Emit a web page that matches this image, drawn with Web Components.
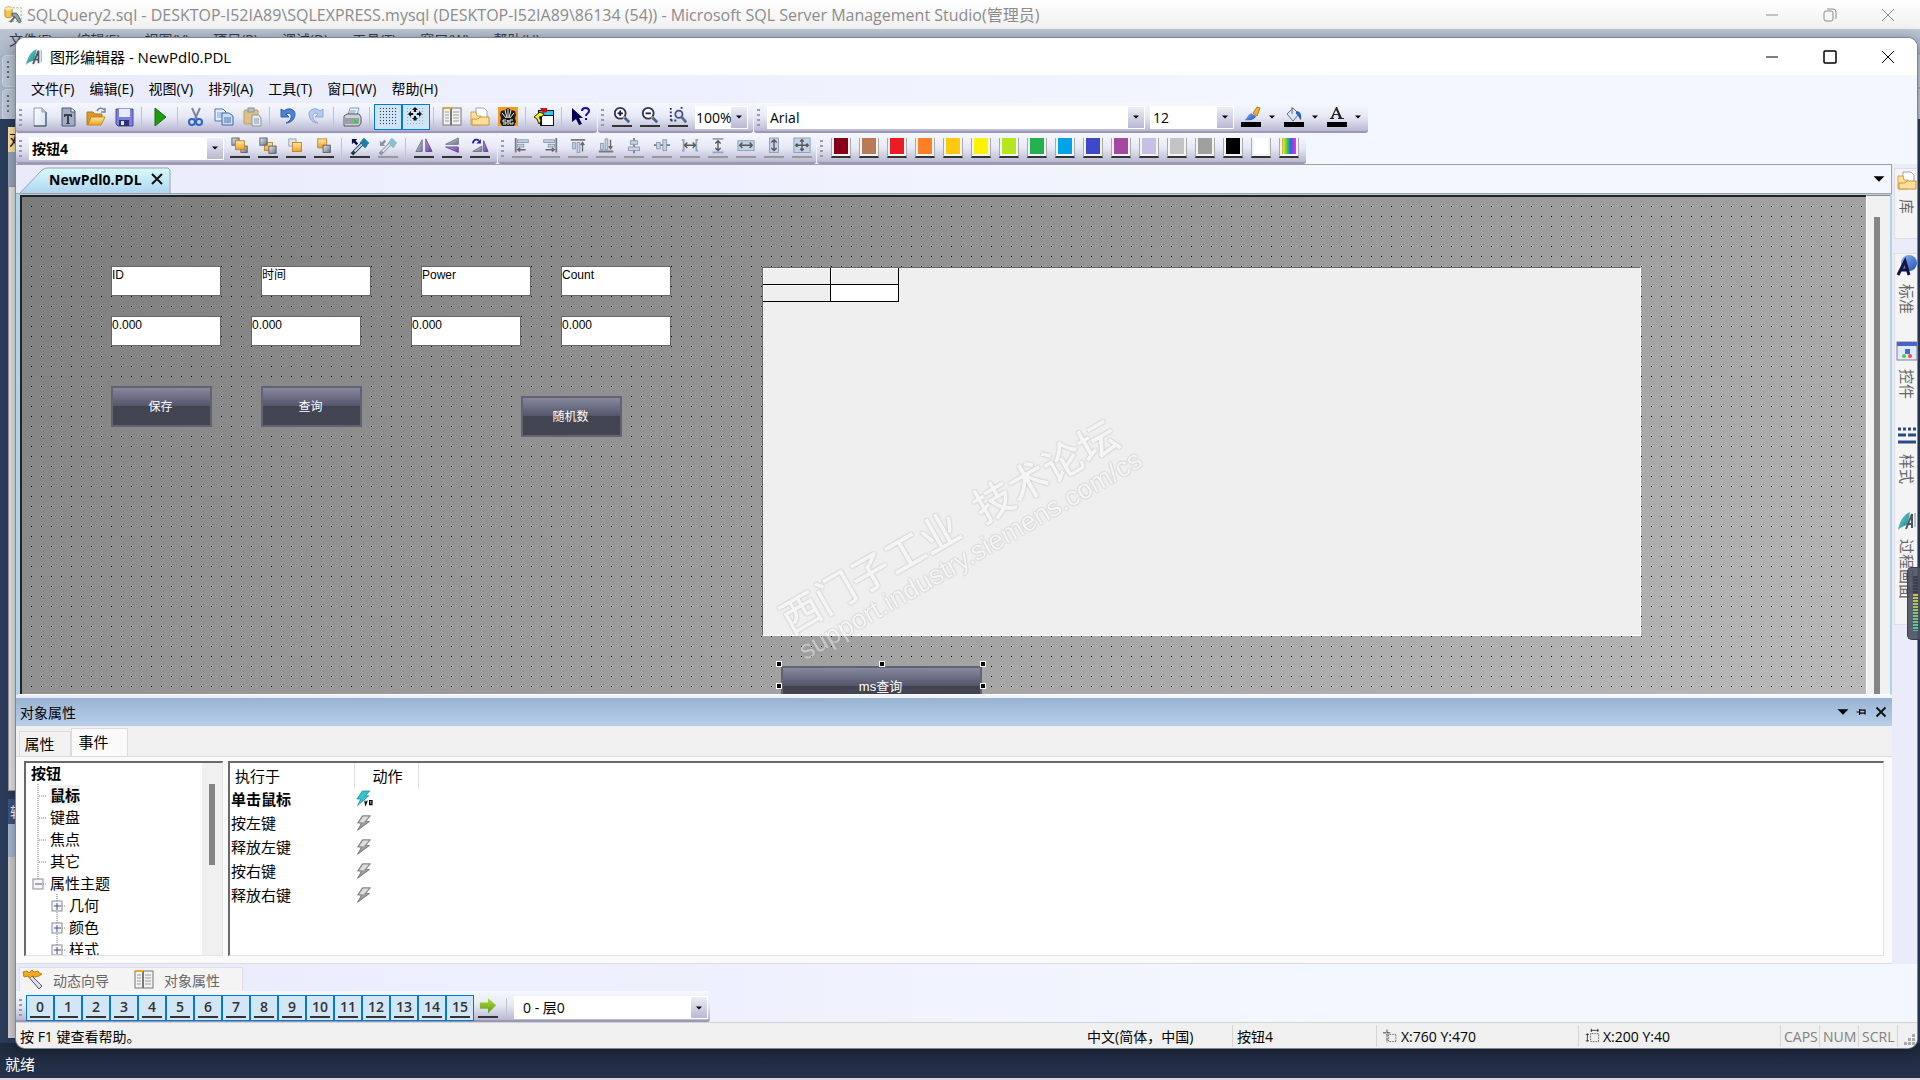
<!DOCTYPE html>
<html lang="zh-CN">
<head>
<meta charset="utf-8">
<title>图形编辑器 - NewPdl0.PDL</title>
<style>
  html, body {
    margin: 0;
    height: 100%;
    overflow: hidden;
  }
  body {
    position: relative;
    font-family: "Open Sans", "Noto Sans CJK SC", sans-serif;
    font-size: 14px;
    color: #000;
    background: #2b3c5b;
  }
</style>
</head>
<body>
<ssms-shell></ssms-shell>

<editor-window>
  <title-bar slot="title" icon="sail" caption="图形编辑器 - NewPdl0.PDL"></title-bar>
  <menu-bar slot="bars" items="文件(F),编辑(E),视图(V),排列(A),工具(T),窗口(W),帮助(H)"></menu-bar>

  <tool-row slot="bars" style="--h:32px">
    <tool-bar icons="new,text,open,save,|,run,|,cut,copy,paste,|,undo,redo,|,print,|,*grid,*snap,|,props,folder,syg,|,wizard,|,help"></tool-bar>
    <tool-bar icons="_zoomin,_zoomout,_zoomarea"><combo-box value="100%" label="缩放" style="--w:53px;--pad:0px"></combo-box></tool-bar>
    <tool-bar>
      <combo-box value="Arial" label="字体" style="--w:378px"></combo-box>
      <combo-box value="12" label="字号" style="--w:84px"></combo-box>
      <split-button icon="pen" label="线条颜色"></split-button>
      <split-button icon="fill" label="填充颜色"></split-button>
      <split-button icon="fontcolor" label="字体颜色"></split-button>
    </tool-bar>
  </tool-row>

  <tool-row slot="bars" style="--h:30px">
    <tool-bar icons="_front,_back,_forward,_backward,|,_pick,-drop,|,_fliph,_flipv,_rotate">
      <combo-box slot="first" bold value="按钮4" label="对象" style="--w:195px"></combo-box>
    </tool-bar>
    <tool-bar icons="-aleft,-aright,-atop,-abottom,-ahc,-avc,-shoriz,-svert,-samew,-sameh,-samewh" tight></tool-bar>
    <tool-bar>
      <color-palette colors="#87001a,#b87a57,#ec1c24,#ff7f27,#ffc90e,#fff200,#b5e61d,#22b14c,#00a2e8,#3f48cc,#a349a4,#c8bfe7,#c3c3c3,#9f9f9f,#000000,#ffffff,rainbow"></color-palette>
    </tool-bar>
  </tool-row>

  <document-area slot="doc" name="NewPdl0.PDL">
    <text-field-object style="left:89px;top:69px">ID</text-field-object>
    <text-field-object style="left:239px;top:69px">时间</text-field-object>
    <text-field-object style="left:399px;top:69px">Power</text-field-object>
    <text-field-object style="left:539px;top:69px">Count</text-field-object>
    <io-field-object label="ID" style="left:89px;top:119px"></io-field-object>
    <io-field-object label="时间" style="left:229px;top:119px"></io-field-object>
    <io-field-object label="Power" style="left:389px;top:119px"></io-field-object>
    <io-field-object label="Count" style="left:539px;top:119px"></io-field-object>
    <button-object style="left:89px;top:189px">保存</button-object>
    <button-object style="left:239px;top:189px">查询</button-object>
    <button-object style="left:499px;top:199px">随机数</button-object>
    <grid-object style="left:740px;top:70px"></grid-object>
    <button-object selected style="left:759px;top:469px;--w:201px">ms查询</button-object>
    <forum-mark style="left:752px;top:409px"></forum-mark>
  </document-area>

  <property-panel slot="panel"></property-panel>
  <dock-strip slot="dock"></dock-strip>
  <bottom-tabs slot="foot"></bottom-tabs>
  <tool-row slot="foot"><layer-bar></layer-bar></tool-row>
  <status-bar slot="foot"></status-bar>
</editor-window>

<level-meter></level-meter>

<script>
const DEFS = `
  <defs>
    <linearGradient id="gold" x2="0" y2="1"><stop offset="0" stop-color="#ffe9a6"/><stop offset="1" stop-color="#f0a020"/></linearGradient>
    <linearGradient id="grey" x2="1" y2="1"><stop offset="0" stop-color="#e8ebf0"/><stop offset="1" stop-color="#6b7280"/></linearGradient>
    <linearGradient id="paper" x2="1" y2="1"><stop offset="0" stop-color="#fff"/><stop offset="1" stop-color="#d5e0ec"/></linearGradient>
    <linearGradient id="blue" x2="1" y2="1"><stop offset="0" stop-color="#8fb8f5"/><stop offset="1" stop-color="#1f4fae"/></linearGradient>
    <linearGradient id="teal" x2="1" y2="1"><stop offset="0" stop-color="#6fd6d6"/><stop offset="1" stop-color="#1c7f88"/></linearGradient>
    <linearGradient id="green" x2="0" y2="1"><stop offset="0" stop-color="#b4de3e"/><stop offset="1" stop-color="#5c9a14"/></linearGradient>
    <linearGradient id="violet" x2="1" y2="1"><stop offset="0" stop-color="#c4a8e8"/><stop offset="1" stop-color="#5a2f96"/></linearGradient>
  </defs>`;

const dots = (x0, y0, n, step, fill) => {
  let out = '';
  for (let y = 0; y < n; y++) {
    for (let x = 0; x < n; x++) {
      out += `<rect x="${x0 + x * step}" y="${y0 + y * step}" width="1" height="1" fill="${fill}"/>`;
    }
  }
  return out;
};

const sheet = (x, y, s, fill) => `<rect x="${x}" y="${y}" width="${s}" height="${s}" fill="url(#${fill})" stroke="${fill === 'gold' ? '#b9832a' : '#555c68'}"/>`;
const pale = 'fill="#c3d3e8" stroke="#8b99ad"';
const lens = (x) => `<circle cx="${x}" cy="7" r="6" fill="#fff" stroke="#2a2f5e" stroke-width="2"/><path d="M11 11l3 2" stroke="#e8a020" stroke-width="3"/><path d="M13 12l5 5" stroke="#3c64a0" stroke-width="3"/>`;

// All icons are drawn on a 20 x 20 grid.
const ICONS = {
  new: '<path d="M4 1h8l4 4v14H4z" fill="url(#paper)" stroke="#8a9aae"/><path d="M16 5v14H4" fill="none" stroke="#33475f"/><path d="M12 1v4h4" fill="#b9c8da" stroke="#8a9aae"/>',
  text: '<path d="M4 1h9l4 3v15H4z" fill="#a3aec3" stroke="#4a5876"/><path d="M13 1v4h4" fill="#eef" stroke="#4a5876"/><path d="M6 7h8v3h-1l-1-1h-1v7h1v1H8v-1h1V9H8l-1 1H6z" fill="#3a3f4d"/>',
  open: '<path d="M1 5h6l2 2h7v3H5L2 18H1z" fill="#d99a2b" stroke="#b57a1a"/><path d="M5 10h14l-4 8H2z" fill="url(#gold)" stroke="#c68a22"/><path d="M11 4c2-4 6-3 7-1m1-2v4h-4" fill="none" stroke="#7386a5" stroke-width="1.5"/>',
  save: '<path d="M2 2h17v17H4l-2-2z" fill="#7a7fe0" stroke="#4a4aa6"/><rect x="5" y="2" width="11" height="8" fill="#e6ebff"/><path d="M5 13h10v6H5z" fill="#33336f"/><rect x="7" y="14" width="3" height="4" fill="#dfe4f5"/>',
  run: '<path d="M5 1l11 9L5 19z" fill="#1f9a12" stroke="#0f6f0a"/>',
  cut: '<path d="M6 1l5 11M14 1L9 12" stroke="#7c8899" stroke-width="2" fill="none"/><circle cx="6" cy="15" r="3" fill="none" stroke="#2f64c0" stroke-width="2"/><circle cx="13" cy="15" r="3" fill="none" stroke="#2f64c0" stroke-width="2"/>',
  copy: '<path d="M1 2h8l3 3v9H1z" fill="#e4eefb" stroke="#4d75b5"/><path d="M3 6h6M3 8h6M3 10h6" stroke="#7fa3d8"/><path d="M8 6h7l4 3v9H8z" fill="#c9dcf6" stroke="#3e68ad"/><path d="M10 11h7M10 13h7M10 15h7" stroke="#4d75b5"/>',
  paste: '<rect x="2" y="3" width="14" height="14" rx="1" fill="#dfc184" stroke="#b59c6a"/><rect x="6" y="1" width="6" height="4" fill="#bcc1c9" stroke="#8b9098"/><path d="M10 8h7l2 3v8h-9z" fill="#e7ebf3" stroke="#8c97a8"/><path d="M12 12h5M12 14h5M12 16h5" stroke="#8c97a8"/>',
  undo: '<path d="M3 2v8h8L8 7c3-2 6 0 5 4-1 3-3 4-5 5 5 0 9-4 9-9 0-5-7-7-11-3z" fill="#4c82d6" stroke="#2d5fb0"/>',
  redo: '<path d="M17 2v8H9l3-3C9 5 6 7 7 11c1 3 3 4 5 5-5 0-9-4-9-9 0-5 7-7 11-3z" fill="#b3cbf0" stroke="#8fa9d4"/>',
  print: '<path d="M6 8l2-7h9l-2 7z" fill="#eef3fb" stroke="#8a9ab5"/><path d="M8 4h6M7 6h6" stroke="#7aa0d8"/><path d="M2 9l3-2h12l2 3v6l-2 3H2z" fill="#cfd2d8" stroke="#555b65"/><path d="M2 11h15v6H2z" fill="#9b9fa8"/><rect x="12" y="13" width="4" height="3" fill="#32d43a"/>',
  grid: dots(2, 1, 6, 3, '#333'),
  snap: dots(1, 1, 6, 3, '#9aa') + '<path d="M9 0l3 3H6zM9 14l3-3H6zM2 7l3-3v6zM16 7l-3-3v6z" fill="#111"/><path d="M9 2v3M9 9v3M4 7h3M11 7h3" stroke="#111" stroke-width="2"/>',
  props: '<rect x="1" y="1" width="18" height="17" fill="#f2f2f2" stroke="#777"/><path d="M9 1v17" stroke="#777" stroke-width="2"/><path d="M2 1h7" stroke="#e8a830" stroke-width="2"/><path d="M3 5h4M3 8h4M3 11h4M3 14h4M11 5h6M11 8h6M11 11h6M11 14h6" stroke="#9a9a9a"/>',
  folder: '<path d="M6 1h8l3 3v8H6z" fill="#fff" stroke="#a0a7b0"/><path d="M1 5h5l1 4h4v9H1z" fill="#ffe1a0" stroke="#d9a04a"/><path d="M2 12h6l2-2h9v8H2z" fill="#ffdf9c" stroke="#cc9138"/>',
  syg: '<rect width="20" height="19" fill="#f39a1c"/><path d="M10 1l3 2 4 1 1 4-1 3 1 4-2 4H4l-2-4 1-4-1-3 1-4 4-1z" fill="#1c1c1c"/><path d="M10 2v9M7 3l2 8M13 3l-2 8M4 6l4 5M16 6l-4 5M5 13h3M5 13v2h3v2H5M9 13l1 2 1-2M10 15v3M15 13h-3v4h3v-2" stroke="#eee" fill="none"/>',
  wizard: '<path d="M4 3h16v16H6V8H4z" fill="#111"/><path d="M5 4h14v4H5z" fill="#28c8f0"/><path d="M8 9h11v9H8z" fill="#fff"/><path d="M6 1h7v4L9 6z" fill="#d01010"/><path d="M0 10l6-5 4 2-1 2-4 1 2 4-2 3-2-5z" fill="#f2f22a" stroke="#222"/>',
  help: '<path d="M2 1v14l4-3 3 6 3-1-3-6h4z" fill="#00004e"/><path d="M12 4c0-4 7-4 7 0 0 3-3 2-3 5m0 2v2" fill="none" stroke="#10109a" stroke-width="2"/>',
  zoomin: lens(8) + '<path d="M5 7h6M8 4v6" stroke="#14164a" stroke-width="2"/>',
  zoomout: lens(8) + '<path d="M5 7h6" stroke="#14164a" stroke-width="2"/>',
  zoomarea: '<path d="M2 1v15M2 15h6M14 0v4" stroke="#2a2f5e" stroke-width="2" stroke-dasharray="2 2"/><circle cx="11" cy="8" r="4" fill="#dde4f8" stroke="#4a4f80" stroke-width="2"/><path d="M14 11l5 6" stroke="#5b6a85" stroke-width="3"/>',
  front: sheet(1, 0, 8, 'grey') + sheet(11, 9, 7, 'grey') + sheet(5, 3, 10, 'gold'),
  back: sheet(6, 5, 9, 'gold') + sheet(1, 0, 8, 'grey') + sheet(11, 9, 8, 'grey'),
  forward: '<rect x="2" y="1" width="8" height="8" fill="#e2e4ea" stroke="#9aa0ab"/>' + sheet(6, 5, 10, 'gold'),
  backward: sheet(3, 1, 10, 'gold') + sheet(9, 8, 8, 'grey'),
  pick: '<path d="M1 1h6L5 3l3 3-2 2-3-3-2 2z" fill="#0a0a40"/><path d="M11 4l6 6M13 1l6 6" stroke="#1c7fa8" stroke-width="4"/><path d="M12 7L3 16l-2 2" stroke="#27364d" stroke-width="4"/><path d="M12 7L4 15" stroke="#bfe2f5" stroke-width="2"/>',
  drop: '<path d="M1 9h6L5 7l3-3-2-2-3 3-2-2z" fill="#8d93a3"/><path d="M11 4l6 6M13 1l6 6" stroke="#8ebdd0" stroke-width="4"/><path d="M12 7L3 16l-2 2" stroke="#8f98a8" stroke-width="4"/><path d="M12 7L4 15" stroke="#d9e6ef" stroke-width="2"/>',
  fliph: '<path d="M8 2v13H1z" fill="url(#grey)" stroke="#6b7280"/><path d="M12 1v14h7z" fill="url(#violet)" stroke="#6a479c"/>',
  flipv: '<path d="M17 0v7H3z" fill="url(#grey)" stroke="#6b7280"/><path d="M3 10h14v6z" fill="url(#violet)" stroke="#6a479c"/>',
  rotate: '<path d="M2 15h10V9z" fill="url(#grey)" stroke="#6b7280"/><path d="M14 3v12h5z" fill="url(#violet)" stroke="#6a479c"/><path d="M2 6c1-5 5-5 7-3" fill="none" stroke="#2323a0" stroke-width="2"/><path d="M11 1v5H6z" fill="#2323a0"/>',
  aleft: `<path d="M3 0v16" stroke="#778" stroke-width="2"/><rect x="5" y="2" width="12" height="3" ${pale}/><rect x="5" y="7" width="7" height="3" ${pale}/><path d="M6 13h8M8 11l-3 2 3 2" fill="none" stroke="#666" stroke-width="1.5"/>`,
  aright: `<path d="M17 0v16" stroke="#778" stroke-width="2"/><rect x="3" y="2" width="12" height="3" ${pale}/><rect x="8" y="7" width="7" height="3" ${pale}/><path d="M5 13h8M12 11l3 2-3 2" fill="none" stroke="#666" stroke-width="1.5"/>`,
  atop: `<path d="M2 2h16" stroke="#778" stroke-width="2"/><rect x="4" y="5" width="3" height="7" ${pale}/><rect x="9" y="5" width="3" height="11" ${pale}/><path d="M15 6v9M13 8l2-3 2 3" fill="none" stroke="#666" stroke-width="1.5"/>`,
  abottom: `<path d="M2 15h16" stroke="#778" stroke-width="2"/><rect x="4" y="6" width="3" height="7" ${pale}/><rect x="9" y="1" width="3" height="12" ${pale}/><path d="M15 2v9M13 9l2 3 2-3" fill="none" stroke="#666" stroke-width="1.5"/>`,
  ahc: `<path d="M10 0v17" stroke="#778" stroke-width="2"/><rect x="6" y="3" width="8" height="4" ${pale}/><rect x="4" y="10" width="12" height="4" ${pale}/>`,
  avc: `<path d="M1 8h18" stroke="#778" stroke-width="2"/><rect x="4" y="5" width="4" height="7" ${pale}/><rect x="11" y="2" width="4" height="12" ${pale}/>`,
  shoriz: '<path d="M1 2h2v12H1M19 2h-2v12h2" fill="none" stroke="#8ba5c8" stroke-width="2"/><path d="M5 8h10M7 5L4 8l3 3M13 5l3 3-3 3" fill="none" stroke="#555" stroke-width="1.5"/>',
  svert: '<path d="M4 1h12M4 16h12" stroke="#8ba5c8" stroke-width="2"/><path d="M10 4v9M7 6l3-3 3 3M7 11l3 3 3-3" fill="none" stroke="#555" stroke-width="1.5"/>',
  samew: `<rect x="1" y="3" width="18" height="11" ${pale}/><path d="M4 8h12M6 5L3 8l3 3M14 5l3 3-3 3" fill="none" stroke="#555" stroke-width="1.5"/>`,
  sameh: `<rect x="5" y="0" width="10" height="16" ${pale}/><path d="M10 2v12M7 5l3-3 3 3M7 11l3 3 3-3" fill="none" stroke="#555" stroke-width="1.5"/>`,
  samewh: `<rect x="1" y="0" width="18" height="16" ${pale}/><path d="M10 2v12M4 8h12M8 4l2-2 2 2M8 12l2 2 2-2M5 6L3 8l2 2M15 6l2 2-2 2" fill="none" stroke="#555" stroke-width="1.5"/>`,
  pen: '<path d="M12 6l4-6 3 1-3 8z" fill="#f0b030" stroke="#b87d18"/><path d="M3 13c3 0 3-5 7-7l5 3c-1 3-4 5-12 4z" fill="url(#blue)"/><path d="M0 15h20v5H0z"/>',
  fill: '<path d="M3 7l6-6 6 6-6 7z" fill="#dbe6f7" stroke="#61718c"/><path d="M8 0v7" stroke="#61718c"/><path d="M12 4c4 0 6 3 5 9-3-2-2-5-5-6z" fill="#2f63b5"/><path d="M0 15h20v5H0z"/>',
  fontcolor: '<path d="M10 0l5 11h2v1h-6v-1h1l-1-3H7l-1 3h1v1H3v-1h1L9 0zM9 3L7 7h4z" fill="#222" fill-rule="evenodd"/><path d="M0 15h20v5H0z"/>',
  sail: '<path d="M1 19C3 10 6 4 13 1c-1 6-2 10-3 13-3 1-6 2-9 5z" fill="url(#teal)"/><path d="M9 18l6-15v14M11 13h4" fill="none" stroke="#4d5560" stroke-width="2"/><path d="M18 2v14" stroke="#8a919c"/>',
  ssms: '<rect x="1" y="1" width="8" height="12" rx="3" fill="#f3c64a" stroke="#b5882a"/><ellipse cx="5" cy="3" rx="4" ry="2" fill="#fdeaa8"/><path d="M10 2h9v15H4" fill="none" stroke="#58c03a" stroke-dasharray="2 2"/><path d="M7 18l6-7" stroke="#5b606c" stroke-width="2"/><path d="M9 8h5l2 3 3 6-2 2-5-7-3-1z" fill="#93a0b5" stroke="#4b4f5a"/>',
  arrow: '<path d="M1 5h9V0l9 8-9 9v-5H1z" fill="url(#green)"/>',
  wand: '<path d="M4 5l3-1 12 12-3 3z" fill="#dde1ea" stroke="#4d5468"/><path d="M0 2l4-1 2 2 3-3 2 2 4-1 1 2 3 1-3 2-4 1-3-1-2 2-2-2-4 1z" fill="#f0aa20" stroke="#c47e10"/>',
  letter: '<circle cx="12" cy="7" r="8" fill="url(#blue)"/><path d="M1 19L8 5l4 14M4 14h6" fill="none" stroke="#14143e" stroke-width="3"/>',
  control: '<rect x="0" y="1" width="20" height="18" fill="#e3e8f5" stroke="#7c8296"/><path d="M0 1h20v4H0z" fill="#4763c4"/><rect x="8" y="8" width="5" height="5" fill="#3b6fe0"/><circle cx="7" cy="15" r="2" fill="#4ccc4c"/><circle cx="13" cy="15" r="2" fill="#e05050"/>',
  lines: '<path d="M1 3h18" stroke="#2a4a86" stroke-width="3" stroke-dasharray="3 2"/><path d="M1 9h8M11 9h8M1 16h18" stroke="#2a4a86" stroke-width="3"/>',
  bolt: '<path d="M8 1h10l-6 7h5L2 19l5-9H2z" fill="#9c9c9c" stroke="#6a6a6a"/><path d="M9 2h7l-6 7H4z" fill="#dedede"/>',
  boltvb: '<path d="M8 0h9l-5 6h4L2 18l4-8H1z" fill="#35c3d0" stroke="#1f8d98"/><path d="M11 12l1 5 2-5M17 12v5h3v-2h-3 3v-3z" fill="none" stroke="#000" stroke-width="1.5"/>',
  posmark: '<path d="M5 2v16M0 6h10" stroke="#222" stroke-dasharray="4 1"/><rect x="7" y="8" width="9" height="9" fill="none" stroke="#222" stroke-dasharray="1 1"/>',
  sizemark: '<rect x="7" y="7" width="10" height="10" fill="none" stroke="#222" stroke-dasharray="1 1"/><path d="M7 3h10M8 1v4M16 1v4M3 7v10M1 8h4M1 16h4" stroke="#222"/>',
  min: '<path d="M4 10h12" stroke="currentColor"/>',
  max: '<rect x="4" y="4" width="12" height="12" rx="1" fill="none" stroke="currentColor" stroke-width="1.5"/>',
  restore: '<rect x="4" y="6" width="9" height="10" rx="2" fill="none" stroke="currentColor"/><path d="M7 4h6a3 3 0 0 1 3 3v7" fill="none" stroke="currentColor"/>',
  close: '<path d="M4 4l12 12M16 4L4 16" stroke="currentColor"/>',
  xbold: '<path d="M5 5l10 10M15 5L5 15" stroke="#111" stroke-width="2"/>',
  down: '<path d="M4 7h12l-6 6z" fill="#000"/>',
  pin: '<path d="M1 10h5M6 5v10M6 7h9v5H6M15 6v8" fill="none" stroke="#000" stroke-width="2"/>'
};

class BaseElement extends HTMLElement {
  connectedCallback() {
    if (this.shadowRoot) return;
    this.attachShadow({ mode: 'open' });
    this.shadowRoot.innerHTML = `
      <style>
        * { box-sizing: border-box; }
        button, select, input { font: inherit; color: inherit; margin: 0; }
        button { border: 0; padding: 0; background: none; }
        ${this.styles()}
      </style>
      ${this.render()}`;
  }
  styles() { return ''; }
  render() { return '<slot></slot>'; }
}

class AppIcon extends BaseElement {
  styles() {
    return `
      :host { display: block; width: 20px; height: 20px; flex: none; }
      svg { display: block; overflow: visible; }`;
  }
  render() {
    return `<svg width="100%" height="100%" viewBox="0 0 20 20" aria-hidden="true">${DEFS}${ICONS[this.getAttribute('name')] || ''}</svg>`;
  }
}

class TitleBar extends BaseElement {
  styles() {
    return `
      :host { display: flex; align-items: center; height: 37px; padding-left: 9px; background: #fff; font-size: 15px; line-height: 18px; }
      app-icon { width: 18px; height: 18px; margin-right: 7px; }
      .caption { flex: 1; white-space: nowrap; }
      button { width: 58px; height: 100%; display: grid; place-items: center; }
      button app-icon { width: 20px; height: 20px; margin: 0; }
      :host([inactive]) { height: 29px; padding: 0 3px 0 4px; color: #8c8c8c; font-size: 16px; background: linear-gradient(#fff, #f0f0f0); }
      :host([inactive]) .caption { margin-left: -2px; }`;
  }
  render() {
    const mid = this.hasAttribute('inactive') ? 'restore' : 'max';
    return `
      <app-icon name="${this.getAttribute('icon')}"></app-icon>
      <span class="caption">${this.getAttribute('caption')}</span>
      <button aria-label="最小化"><app-icon name="min"></app-icon></button>
      <button aria-label="最大化"><app-icon name="${mid}"></app-icon></button>
      <button aria-label="关闭"><app-icon name="close"></app-icon></button>`;
  }
}

class MenuBar extends BaseElement {
  styles() {
    return `
      :host { display: flex; align-items: center; gap: var(--menu-gap, 15px); height: 27px; padding-left: 15px; }
      button { white-space: nowrap; line-height: 18px; }`;
  }
  render() {
    return this.getAttribute('items').split(',').map(item => `<button>${item}</button>`).join('');
  }
}

class SsmsShell extends BaseElement {
  styles() {
    return `
      :host { display: flex; flex-direction: column; height: 100%; }
      .menu { background: linear-gradient(#bcc5d3, #aab5c6); --menu-gap: 24px; height: 26px; }
      .menu menu-bar { padding-left: 9px; height: 22px; color: #333c4c; }
      .bars { height: 64px; background: #a5b1c4; display: grid; grid-template-rows: 1fr 1fr; gap: 2px; padding-left: 2px; }
      .bars i { background: #b8c2d1; border-radius: 4px 0 0 4px; border: 1px solid #c9d1dd; padding: 5px 4px; }
      .bars i::before { content: ""; display: block; width: 2px; height: 20px; background: repeating-linear-gradient(#5b6980 0 2px, transparent 2px 5px); }
      .work { flex: 1; padding: 8px 8px 5px; display: flex; flex-direction: column; background: #2b3c5b; overflow: hidden; }
      .tab { height: 25px; background: #fbe3a0; font-size: 15px; line-height: 25px; padding-left: 1px; }
      .head { height: 34px; background: #98a5bb; }
      .page { flex: 10; background: linear-gradient(90deg, #e4e4e6, #d2d2d4); border: 1px solid #999; }
      .out { height: 25px; margin-top: 8px; background: #3f5482; color: #fff; padding-left: 2px; line-height: 25px; }
      .outbar { height: 33px; background: #a9b8d3; }
      .result { flex: 3; background: #cfcfd1; }
      .status { height: 37px; display: flex; align-items: center; padding: 6px 5px 0; font-size: 15px; color: #fff; background: linear-gradient(#1f2b3d, #243049); border-bottom: 2px solid #ddd5e2; }`;
  }
  render() {
    return `
      <title-bar inactive icon="ssms" caption="SQLQuery2.sql - DESKTOP-I52IA89\\SQLEXPRESS.mysql (DESKTOP-I52IA89\\86134 (54)) - Microsoft SQL Server Management Studio(管理员)"></title-bar>
      <div class="menu"><menu-bar items="文件(F),编辑(E),视图(V),项目(P),调试(D),工具(T),窗口(W),帮助(H)"></menu-bar></div>
      <div class="bars"><i></i><i></i></div>
      <div class="work">
        <div class="tab">对</div>
        <div class="head"></div>
        <div class="page"></div>
        <div class="out">转</div>
        <div class="outbar"></div>
        <div class="result"></div>
      </div>
      <div class="status">就绪</div>`;
  }
}

class EditorWindow extends BaseElement {
  styles() {
    return `
      :host {
        position: absolute; inset: 38px 3px 32px 16px; display: flex; flex-direction: column;
        border-radius: 9px; overflow: hidden;
        box-shadow: 0 0 0 1px #7d8798, 0 2px 14px rgba(0, 0, 0, .4);
        background: linear-gradient(90deg, #e9ebfb, #f3f7ff 70%);
      }
      .middle { flex: 1; display: flex; min-height: 0; }
      .left { flex: 1; display: flex; flex-direction: column; min-width: 0; }`;
  }
  render() {
    return `
      <slot name="title"></slot>
      <slot name="bars"></slot>
      <div class="middle">
        <div class="left"><slot name="doc"></slot><slot name="panel"></slot></div>
        <slot name="dock"></slot>
      </div>
      <slot name="foot"></slot>`;
  }
}

class ToolRow extends BaseElement {
  styles() {
    return ':host { display: flex; align-items: center; height: var(--h, 31px); gap: 1px; }';
  }
}

class ToolBar extends BaseElement {
  styles() {
    return `
      :host {
        display: flex; align-items: center; height: 30px; padding-right: 3px;
        border-bottom: 2px solid #9a98b5; border-radius: 0 3px 3px 3px; box-sizing: border-box;
        background: linear-gradient(#f6f8fe, #e6e8f5 50%, #b9b8d2);
      }
      :host([tight]) { padding-right: 0; }
      .grip { width: 3px; height: 17px; margin: 0 4px 0 3px; background: repeating-linear-gradient(#9a9aaa 0 2px, transparent 2px 5px); }
      .sep { width: 1px; height: 20px; margin: 0 4px 0 3px; background: #c3c3cf; }
      button { width: 28px; height: 26px; display: grid; place-items: center; }
      .on { background: #cfe4f7; border: 1px solid #0078d7; }
      .line app-icon { border-bottom: 2px solid #333; }
      .off app-icon { border-bottom: 2px solid #999; }`;
  }
  render() {
    const names = (this.getAttribute('icons') || '').split(',').filter(Boolean);
    const kinds = { '*': 'on', '_': 'line', '-': 'off' };
    return '<span class="grip"></span><slot name="first"></slot>' + names.map(name => {
      if (name === '|') return '<span class="sep"></span>';
      const kind = kinds[name[0]];
      const icon = kind ? name.slice(1) : name;
      return `<button class="${kind || ''}" aria-label="${icon}"><app-icon name="${icon}"></app-icon></button>`;
    }).join('') + '<slot></slot>';
  }
}

class ComboBox extends BaseElement {
  styles() {
    return `
      :host { display: block; position: relative; width: var(--w, 100px); height: 23px; margin: 0 2px 0 3px; }
      select { appearance: none; width: 100%; height: 100%; border: 1px solid #fff; border-radius: 0; background: #fff; padding: 0 16px 0 var(--pad, 2px); outline: 0; }
      :host([bold]) select { font-weight: bold; }
      span { position: absolute; right: 1px; top: 1px; bottom: 1px; width: 16px; display: grid; place-items: center; background: linear-gradient(#eceef7, #b9b8d2); pointer-events: none; }
      app-icon { width: 10px; height: 10px; }`;
  }
  render() {
    return `
      <select aria-label="${this.getAttribute('label')}"><option>${this.getAttribute('value')}</option></select>
      <span><app-icon name="down"></app-icon></span>`;
  }
}

class SplitButton extends BaseElement {
  styles() {
    return `
      :host { display: flex; align-items: center; width: 43px; }
      button { display: flex; align-items: center; gap: 6px; padding-left: 5px; }
      .arrow { width: 10px; height: 10px; }`;
  }
  render() {
    return `<button aria-label="${this.getAttribute('label')}"><app-icon name="${this.getAttribute('icon')}"></app-icon><app-icon class="arrow" name="down"></app-icon></button>`;
  }
}

class ColorPalette extends BaseElement {
  styles() {
    return `
      :host { display: flex; }
      button { width: 28px; height: 26px; padding: 3px 4px; }
      i { display: block; height: 20px; border: 1px solid #a9a9a9; border-top: 0; border-bottom: 2px solid #333; box-shadow: inset 2px 0 #f4f4f4, inset -2px -2px #f4f4f4; background: var(--c); }
      .rainbow { background: linear-gradient(90deg, #e84a20, #e8e020, #30d050, #3060e8, #d030e0, #e060c0); }`;
  }
  render() {
    return this.getAttribute('colors').split(',').map(color => color === 'rainbow'
      ? '<button aria-label="更多颜色"><i class="rainbow"></i></button>'
      : `<button aria-label="${color}"><i style="--c:${color}"></i></button>`).join('');
  }
}

class DocumentArea extends BaseElement {
  styles() {
    return `
      :host { flex: 1; display: flex; flex-direction: column; min-height: 0; }
      .tabs { height: 30px; display: flex; align-items: flex-end; justify-content: space-between; border: 1px solid #a0a0a0; border-left: 0; }
      .tab { position: relative; width: 151px; height: 26px; margin-left: 4px; }
      .tab svg { position: absolute; inset: 0; }
      .tab button { position: relative; display: flex; align-items: center; gap: 5px; height: 24px; padding-left: 29px; font-weight: bold; }
      .list { align-self: center; margin-right: 3px; }
      .list app-icon { width: 18px; height: 18px; }
      .frame { flex: 1; min-height: 0; display: flex; margin-bottom: 3px; border: solid #b0d3ec; border-width: 1px 2px 0 4px; border-bottom: 1px solid #fff; }
      .surface {
        flex: 1; position: relative; overflow: hidden; border-left: 2px solid #222; border-top: 2px solid #222;
        background: linear-gradient(155deg, #7b7b7b, #b9b9b9);
      }
      .dots {
        position: absolute; inset: 9px 0 0 9px; background: #000;
        -webkit-mask: linear-gradient(90deg, #000 1px, transparent 1px) 0 0 / 10px 10px, linear-gradient(#000 1px, transparent 1px) 0 0 / 10px 10px;
        -webkit-mask-composite: source-in; mask-composite: intersect;
      }
      .scroll { width: 24px; background: #f0f0f0; border-left: 1px solid #fff; border-top: 1px solid #888; padding: 21px 0 0 7px; }
      .scroll i { display: block; width: 6px; height: 100%; background: #858585; }`;
  }
  render() {
    return `
      <div class="tabs">
        <div class="tab">
          <svg width="151" height="26">
            <defs><linearGradient id="t" x2="0" y2="1"><stop offset="0" stop-color="#d6fbfd"/><stop offset="1" stop-color="#b0d6f2"/></linearGradient></defs>
            <path d="M0 26L22 3Q25 1 27 1H148L150 3V26" fill="url(#t)" stroke="#a0a0a0"/>
          </svg>
          <button>${this.getAttribute('name')} <app-icon name="xbold"></app-icon></button>
        </div>
        <button class="list" aria-label="文档列表"><app-icon name="down"></app-icon></button>
      </div>
      <div class="frame">
        <div class="surface"><div class="dots"></div><slot></slot></div>
        <div class="scroll"><i></i></div>
      </div>`;
  }
}

class TextFieldObject extends BaseElement {
  styles() {
    return `
      :host {
        position: absolute; width: 110px; height: 30px; box-sizing: border-box;
        background: #fff; border: 1px solid #666;
        font: 12px/16px "Liberation Sans", "Noto Sans CJK SC", sans-serif;
      }`;
  }
}

class IoFieldObject extends BaseElement {
  styles() {
    return `
      :host { position: absolute; width: 110px; height: 30px; font: 12px/16px "Liberation Sans", sans-serif; }
      input { display: block; width: 100%; height: 100%; border: 1px solid #666; padding: 0 0 12px; background: #fff; outline: 0; }`;
  }
  render() {
    return `<input value="0.000" aria-label="${this.getAttribute('label')}">`;
  }
}

class ButtonObject extends BaseElement {
  styles() {
    return `
      :host { position: absolute; width: var(--w, 101px); height: 41px; font: 12px/16px "Liberation Sans", "Noto Sans CJK SC", sans-serif; }
      :host([selected]) { font-size: 13px; }
      button {
        width: 100%; height: 100%; padding: 1px 2px 0 0; color: #fff; border: 2px solid #62636f;
        background: linear-gradient(#8688a0, #55566a 48%, #434452 50%, #444552);
      }
      i { position: absolute; width: 6px; height: 6px; background: #000; border: 1px solid #fff; }
      .l { left: -5px; } .c { left: calc(50% - 3px); } .r { right: -4px; }
      .t { top: -5px; } .m { top: 17px; }`;
  }
  render() {
    const handles = this.hasAttribute('selected')
      ? '<i class="l t"></i><i class="c t"></i><i class="r t"></i><i class="l m"></i><i class="r m"></i>' : '';
    return `<button><slot></slot></button>${handles}`;
  }
}

class GridObject extends BaseElement {
  styles() {
    return `
      :host {
        position: absolute; width: 879px; height: 369px; box-sizing: border-box; background: #efefef;
        border: 1px solid #666; border-right-color: #fff; border-bottom-color: #fff;
      }
      table { border-collapse: separate; border-spacing: 0; margin: 0; }
      td { width: 68px; height: 17px; padding: 0; border: solid #000; border-width: 0 1px 1px 0; box-shadow: inset 1px 1px #fff; }
      .cell { background: #fff; }`;
  }
  render() {
    return '<table><tr><td></td><td></td></tr><tr><td></td><td class="cell"></td></tr></table>';
  }
}

class ForumMark extends BaseElement {
  styles() {
    return `
      :host {
        position: absolute; transform: rotate(-30deg); transform-origin: 0 0; pointer-events: none;
        color: #fff; text-shadow: 0 0 2px #888, 0 0 2px #888; opacity: .4;
        font-family: "Liberation Sans", "Noto Sans CJK SC", sans-serif;
      }
      div { font-size: 40px; line-height: 40px; font-weight: 500; white-space: pre; }
      p { margin: 0; font-size: 27px; line-height: 28px; white-space: pre; }`;
  }
  render() {
    return '<div>西门子工业  技术论坛</div><p>support.industry.siemens.com/cs</p>';
  }
}

class PropertyPanel extends BaseElement {
  styles() {
    return `
      :host { display: flex; flex-direction: column; height: 266px; font-size: 15px; background: #f0f0f0; }
      header { height: 28px; display: flex; align-items: center; padding: 0 2px 0 4px; font-size: 14px; background: linear-gradient(#98b3d2, #b7cfea); }
      header span { flex: 1; }
      header button { width: 19px; display: grid; place-items: center; }
      header app-icon { width: 18px; height: 18px; }
      header app-icon[name=pin] { width: 12px; height: 12px; }
      .tabs { display: flex; align-items: flex-end; height: 30px; padding-left: 3px; }
      .tabs button { height: 25px; width: 52px; padding-right: 11px; background: #f2f2f2; border: 1px solid #dcdcdc; border-bottom: 0; line-height: 22px; }
      .tabs .on { width: 57px; height: 28px; background: #fafafa; padding: 0 12px 2px 0; }
      .body { flex: 1; min-height: 0; display: flex; gap: 5px; padding: 4px 8px 7px; background: #fafafa; border-top: 1px solid #dcdcdc; border-bottom: 1px solid #dcdcdc; }
      .tree, .events { background: #fff; border: 2px solid #696969; border-right: 1px solid #e3e3e3; border-bottom: 1px solid #e3e3e3; overflow: hidden; }
      .tree { width: 199px; display: flex; }
      .events { flex: 1; }
      ul { flex: 1; list-style: none; margin: 0; padding: 0 0 0 5px; }
      li { display: flex; align-items: center; height: 22px; line-height: 20px; padding-bottom: 2px; white-space: nowrap; }
      li.sub { padding-left: 19px; }
      .sel { background: #f0f0f0; }
      svg { display: block; flex: none; }
      .scroll { width: 20px; background: #f0f0f0; padding: 21px 7px 0; }
      .scroll i { display: block; height: 81px; background: #858585; }
      table { border-collapse: collapse; table-layout: fixed; width: 188px; }
      th { height: 25px; padding: 0 0 0 5px; font-weight: normal; text-align: left; border-right: 1px solid #e0e0e0; }
      th + th { padding-left: 18px; }
      td { height: 24px; line-height: 20px; padding: 0 0 2px 1px; white-space: nowrap; }
      td app-icon { width: 16px; height: 16px; margin-left: 1px; }`;
  }
  guide(kind) {
    const line = 'stroke="#777" stroke-dasharray="1 1" fill="none"';
    if (kind === 'leaf') return `<svg width="19" height="22"><path d="M7 0V22M8 12H16" ${line}/></svg>`;
    const plus = kind === 'plus' ? 'M7 9V16M4 12H11' : 'M4 12H11';
    const stem = kind === 'plus' ? 'M7 0V22' : 'M7 0V8';
    return `<svg width="19" height="22"><path d="${stem}M12 12H16" ${line}/><rect x="2" y="7" width="10" height="10" fill="#f6f6f6" stroke="#8c8c8c"/><path d="${plus}" stroke="#3a55a0"/></svg>`;
  }
  render() {
    const leaves = ['鼠标', '键盘', '焦点', '其它'].map((name, i) =>
      `<li>${this.guide('leaf')}${i ? name : `<b class="sel">${name}</b>`}</li>`).join('');
    const themes = ['几何', '颜色', '样式'].map(name => `<li class="sub">${this.guide('plus')}${name}</li>`).join('');
    const rows = ['按左键', '释放左键', '按右键', '释放右键'].map(name =>
      `<tr><td>${name}</td><td><app-icon name="bolt"></app-icon></td></tr>`).join('');
    return `
      <header>
        <span>对象属性</span>
        <button aria-label="菜单"><app-icon name="down"></app-icon></button>
        <button aria-label="固定"><app-icon name="pin"></app-icon></button>
        <button aria-label="关闭"><app-icon name="xbold"></app-icon></button>
      </header>
      <div class="tabs" role="tablist">
        <button role="tab">属性</button><button role="tab" class="on" aria-selected="true">事件</button>
      </div>
      <div class="body">
        <div class="tree">
          <ul><li><b>按钮</b></li>${leaves}<li>${this.guide('minus')}属性主题</li>${themes}</ul>
          <div class="scroll"><i></i></div>
        </div>
        <div class="events">
          <table>
            <colgroup><col style="width:124px"><col style="width:64px"></colgroup>
            <tr><th>执行于</th><th>动作</th></tr>
            <tr><td><b>单击鼠标</b></td><td><app-icon name="boltvb"></app-icon></td></tr>
            ${rows}
          </table>
        </div>
      </div>`;
  }
}

class DockStrip extends BaseElement {
  styles() {
    return `
      :host { width: 25px; display: flex; flex-direction: column; gap: 14px; padding: 4px 0 0 2px; box-sizing: border-box; background: #ebecfa; }
      .group { border: 1px solid #dedee4; border-right: 0; background: #f4f4f5; }
      button { display: flex; flex-direction: column; align-items: center; gap: 8px; width: 22px; height: 85px; padding: 2px 0 0 2px; color: #666; font-size: 15px; }
      .short { height: 69px; }
      .long { height: 115px; }
      span { writing-mode: vertical-rl; text-orientation: sideways; line-height: 20px; white-space: nowrap; }`;
  }
  render() {
    const tab = ([icon, name, size]) => `<button class="${size || ''}"><app-icon name="${icon}"></app-icon><span>${name}</span></button>`;
    return `
      <div class="group">${tab(['folder', '库', 'short'])}</div>
      <div class="group">${[['letter', '标准'], ['control', '控件'], ['lines', '样式'], ['sail', '过程画面', 'long']].map(tab).join('')}</div>`;
  }
}

class BottomTabs extends BaseElement {
  styles() {
    return `
      :host { display: flex; height: 27px; padding: 3px 0 0 3px; box-sizing: border-box; }
      div { display: flex; background: #f4f4f5; border: 1px solid #dedee4; border-bottom: 0; }
      button { display: flex; align-items: center; gap: 10px; width: 111px; padding-left: 3px; color: #666; }`;
  }
  render() {
    return `<div>
      <button><app-icon name="wand"></app-icon>动态向导</button>
      <button><app-icon name="props"></app-icon>对象属性</button>
    </div>`;
  }
}

class LayerBar extends BaseElement {
  styles() {
    return `
      :host {
        display: flex; align-items: center; height: 31px; padding-top: 4px; box-sizing: border-box;
        border-bottom: 2px solid #9a98b5; border-radius: 0 3px 3px 0;
        background: linear-gradient(#f6f8fe, #e6e8f5 50%, #b9b8d2); --pad: 8px;
      }
      .grip { width: 3px; height: 17px; margin: 0 4px 0 3px; background: repeating-linear-gradient(#9a9aaa 0 2px, transparent 2px 5px); }
      button { width: 28px; height: 26px; padding: 0 3px; background: #d2e6f5; border: 1px solid #0078d7; font-weight: 600; color: #333; }
      button span { display: block; height: 20px; line-height: 17px; border-bottom: 2px solid #333; }
      .go { background: none; border: 0; padding: 0 4px; }
      .go app-icon { border-bottom: 2px solid #333; }
      .sep { width: 1px; height: 20px; margin: 0 4px; background: #c3c3cf; }`;
  }
  render() {
    const layers = Array.from({ length: 16 }, (_, i) => `<button aria-pressed="true"><span>${i}</span></button>`).join('');
    return `<span class="grip"></span>${layers}
      <button class="go" aria-label="转到"><app-icon name="arrow"></app-icon></button>
      <span class="sep"></span>
      <combo-box value="0 - 层0" label="层" style="--w:194px"></combo-box>`;
  }
}

class StatusBar extends BaseElement {
  styles() {
    return `
      :host { display: flex; align-items: stretch; height: 26px; padding-right: 19px; box-sizing: border-box; background: #f0f0f0; border-top: 1px solid #d2d2d2; position: relative; }
      span { display: flex; align-items: center; gap: 2px; padding-left: 4px; margin: 2px 0 1px; border-right: 1px solid #d5d5d5; white-space: nowrap; }
      .hint { flex: 1; border: 0; }
      .lang { width: 150px; }
      .name { width: 144px; }
      .pos { width: 202px; padding-left: 6px; }
      .key { width: 39px; padding-left: 3px; color: #808080; }
      app-icon { width: 16px; height: 16px; }
      svg { position: absolute; right: 2px; bottom: 3px; }`;
  }
  render() {
    return `
      <span class="hint">按 F1 键查看帮助。</span>
      <span class="lang">中文(简体，中国)</span>
      <span class="name">按钮4</span>
      <span class="pos"><app-icon name="posmark"></app-icon>X:760 Y:470</span>
      <span class="pos"><app-icon name="sizemark"></app-icon>X:200 Y:40</span>
      <span class="key">CAPS</span><span class="key">NUM</span><span class="key">SCRL</span>
      <svg width="11" height="11" fill="#aaa"><path d="M0 8h3v3H0zM4 8h3v3H4zM8 8h3v3H8zM4 4h3v3H4zM8 4h3v3H8zM8 0h3v3H8z"/></svg>`;
  }
}

class LevelMeter extends BaseElement {
  styles() {
    return `
      :host { position: absolute; right: 0; top: 567px; width: 13px; height: 73px; box-sizing: border-box; padding: 8px 2px 8px 5px; border-radius: 5px 0 0 5px; border: 1px solid #3b3f4b; border-right: 0; background: rgba(74, 80, 96, .9); }
      div { height: 100%; background: repeating-linear-gradient(transparent 0 2px, #4a5060 2px 3px), linear-gradient(#3a3f4c 30%, #e0c040 32%, #8cc860 65%, #40c8a8); }`;
  }
  render() { return '<div></div>'; }
}

customElements.define('app-icon', AppIcon);
customElements.define('title-bar', TitleBar);
customElements.define('menu-bar', MenuBar);
customElements.define('ssms-shell', SsmsShell);
customElements.define('editor-window', EditorWindow);
customElements.define('tool-row', ToolRow);
customElements.define('tool-bar', ToolBar);
customElements.define('combo-box', ComboBox);
customElements.define('split-button', SplitButton);
customElements.define('color-palette', ColorPalette);
customElements.define('document-area', DocumentArea);
customElements.define('text-field-object', TextFieldObject);
customElements.define('io-field-object', IoFieldObject);
customElements.define('button-object', ButtonObject);
customElements.define('grid-object', GridObject);
customElements.define('forum-mark', ForumMark);
customElements.define('property-panel', PropertyPanel);
customElements.define('dock-strip', DockStrip);
customElements.define('bottom-tabs', BottomTabs);
customElements.define('layer-bar', LayerBar);
customElements.define('status-bar', StatusBar);
customElements.define('level-meter', LevelMeter);
</script>
</body>
</html>
